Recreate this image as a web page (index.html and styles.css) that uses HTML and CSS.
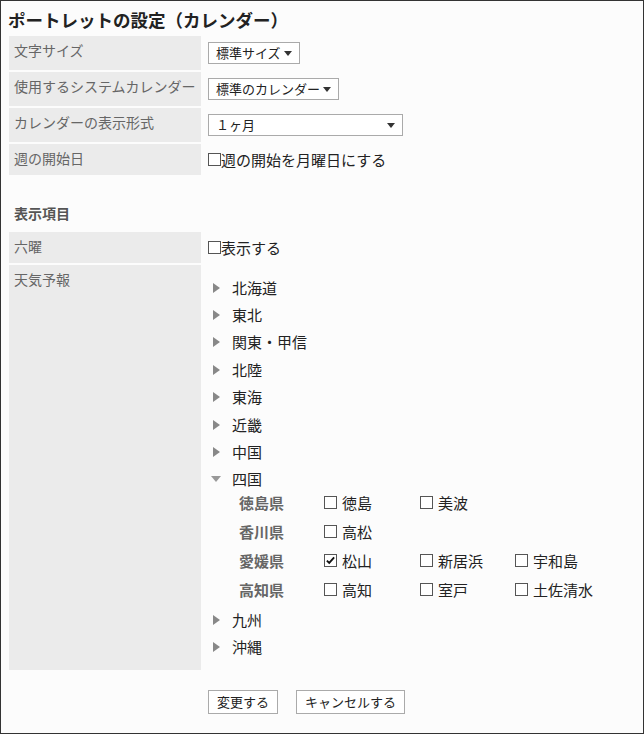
FILE: index.html
```html
<!DOCTYPE html>
<html lang="ja">
<head>
    <meta charset="UTF-8" />
    <title>ポートレットの設定（カレンダー）</title>
    <link rel="stylesheet" href="styles.css">
</head>
<body>
    <div class="portlet">
        <h1 class="portlet-title">ポートレットの設定（カレンダー）</h1>

        <div class="form-table">
            <div class="form-label">文字サイズ</div>
            <div class="form-value">
                <span class="select select-size">標準サイズ<span class="select-arrow"></span></span>
            </div>

            <div class="form-label">使用するシステムカレンダー</div>
            <div class="form-value">
                <span class="select select-calendar">標準のカレンダー<span class="select-arrow"></span></span>
            </div>

            <div class="form-label">カレンダーの表示形式</div>
            <div class="form-value">
                <span class="select select-format">１ヶ月<span class="select-arrow"></span></span>
            </div>

            <div class="form-label">週の開始日</div>
            <div class="form-value form-value-check">
                <label class="check"><span class="checkbox"></span>週の開始を月曜日にする</label>
            </div>
        </div>

        <h2 class="section-title">表示項目</h2>

        <div class="form-table">
            <div class="form-label">六曜</div>
            <div class="form-value form-value-check">
                <label class="check"><span class="checkbox"></span>表示する</label>
            </div>

            <div class="form-label">天気予報</div>
            <div class="form-value form-value-tree">
                <ul class="tree">
                    <li class="tree-item"><span class="tree-icon"><span class="arrow-right"></span></span>北海道</li>
                    <li class="tree-item"><span class="tree-icon"><span class="arrow-right"></span></span>東北</li>
                    <li class="tree-item"><span class="tree-icon"><span class="arrow-right"></span></span>関東・甲信</li>
                    <li class="tree-item"><span class="tree-icon"><span class="arrow-right"></span></span>北陸</li>
                    <li class="tree-item"><span class="tree-icon"><span class="arrow-right"></span></span>東海</li>
                    <li class="tree-item"><span class="tree-icon"><span class="arrow-right"></span></span>近畿</li>
                    <li class="tree-item"><span class="tree-icon"><span class="arrow-right"></span></span>中国</li>
                    <li class="tree-item"><span class="tree-icon"><span class="arrow-down"></span></span>四国</li>
                </ul>

                <div class="city-table">
                    <div class="pref">徳島県</div>
                    <label class="city"><span class="checkbox"></span>徳島</label>
                    <label class="city"><span class="checkbox"></span>美波</label>
                    <div></div>

                    <div class="pref">香川県</div>
                    <label class="city"><span class="checkbox"></span>高松</label>
                    <div></div>
                    <div></div>

                    <div class="pref">愛媛県</div>
                    <label class="city"><span class="checkbox checked"><svg viewBox="0 0 13 13" width="11" height="11"><path d="M2.2 6.6 L5 9.4 L10.8 2.8" fill="none" stroke="#111" stroke-width="2.2"/></svg></span>松山</label>
                    <label class="city"><span class="checkbox"></span>新居浜</label>
                    <label class="city"><span class="checkbox"></span>宇和島</label>

                    <div class="pref">高知県</div>
                    <label class="city"><span class="checkbox"></span>高知</label>
                    <label class="city"><span class="checkbox"></span>室戸</label>
                    <label class="city"><span class="checkbox"></span>土佐清水</label>
                </div>

                <ul class="tree">
                    <li class="tree-item"><span class="tree-icon"><span class="arrow-right"></span></span>九州</li>
                    <li class="tree-item"><span class="tree-icon"><span class="arrow-right"></span></span>沖縄</li>
                </ul>
            </div>
        </div>

        <div class="buttons">
            <button class="button" type="button">変更する</button>
            <button class="button" type="button">キャンセルする</button>
        </div>
    </div>
</body>
</html>
```

FILE: styles.css
```css
html, body {
    margin: 0;
    padding: 0;
}

body {
    background: #fff;
    font-family: "Noto Sans CJK JP", sans-serif;
    color: #333;
}

.portlet {
    box-sizing: border-box;
    width: 644px;
    height: 734px;
    border: 1px solid #333;
    background: #fcfcfc;
}

.portlet-title {
    margin: 0 0 4px 0;
    padding: 7px 0 0 7px;
    font-size: 17.5px;
    line-height: 24px;
    font-weight: bold;
    color: #222;
}

.section-title {
    margin: 0;
    padding: 28px 0 9px 13px;
    font-size: 14px;
    line-height: 20px;
    font-weight: bold;
    color: #555;
}

.form-table {
    display: grid;
    grid-template-columns: 192px 1fr;
    column-gap: 7px;
    row-gap: 2px;
    margin-left: 8px;
}

.form-label {
    background: #ebebeb;
    padding: 4px 5px;
    font-size: 14px;
    line-height: 20px;
    color: #666;
    white-space: nowrap;
}

.form-value {
    padding: 6px 0;
    font-size: 15px;
    line-height: 22px;
}

.form-value-check {
    padding: 5px 0;
    line-height: 21px;
}

.form-value-tree {
    padding: 9px 0 9px 0;
}

/* セレクトボックス */
.select {
    box-sizing: border-box;
    display: flex;
    align-items: center;
    justify-content: space-between;
    height: 22px;
    padding: 0 7px 0 7px;
    border: 1px solid #aaa;
    background: #fff;
    font-size: 13px;
    color: #222;
    white-space: nowrap;
}

.select-size {
    width: 92px;
}

.select-calendar {
    width: 131px;
}

.select-format {
    width: 195px;
}

.select-arrow {
    flex-shrink: 0;
    width: 0;
    height: 0;
    border-top: 5px solid #333;
    border-left: 4px solid transparent;
    border-right: 4px solid transparent;
    margin-left: 3px;
}

/* チェックボックス */
.check {
    display: flex;
    align-items: center;
    color: #222;
}

.checkbox {
    box-sizing: border-box;
    display: inline-flex;
    align-items: center;
    justify-content: center;
    width: 13px;
    height: 13px;
    border: 1px solid #555;
    background: #fff;
    flex-shrink: 0;
}

/* 地域ツリー */
.tree {
    list-style: none;
    margin: 0;
    padding: 0;
}

.tree-item {
    display: flex;
    align-items: center;
    height: 27.4px;
    color: #222;
}

.tree-icon {
    display: inline-flex;
    align-items: center;
    justify-content: center;
    width: 10px;
    margin-left: 3px;
    margin-right: 11px;
}

.arrow-right {
    width: 0;
    height: 0;
    border-left: 7px solid #888;
    border-top: 5px solid transparent;
    border-bottom: 5px solid transparent;
    margin-left: 1px;
}

.arrow-down {
    width: 0;
    height: 0;
    border-top: 6px solid #999;
    border-left: 5px solid transparent;
    border-right: 5px solid transparent;
}

.city-table {
    display: grid;
    grid-template-columns: 85px 96px 95px auto;
    grid-auto-rows: 29px;
    margin: -5px 0 2px 31px;
}

.pref {
    display: flex;
    align-items: center;
    font-weight: bold;
    color: #666;
}

.city {
    display: flex;
    align-items: center;
    color: #222;
}

.city .checkbox {
    margin-right: 5px;
}

/* ボタン */
.buttons {
    display: flex;
    gap: 18px;
    margin: 20px 0 0 207px;
}

.button {
    height: 24px;
    padding: 0 8px;
    border: 1px solid #aaa;
    background: #fff;
    font-family: "Noto Sans CJK JP", sans-serif;
    font-size: 13px;
    color: #222;
    line-height: 20px;
}
```
